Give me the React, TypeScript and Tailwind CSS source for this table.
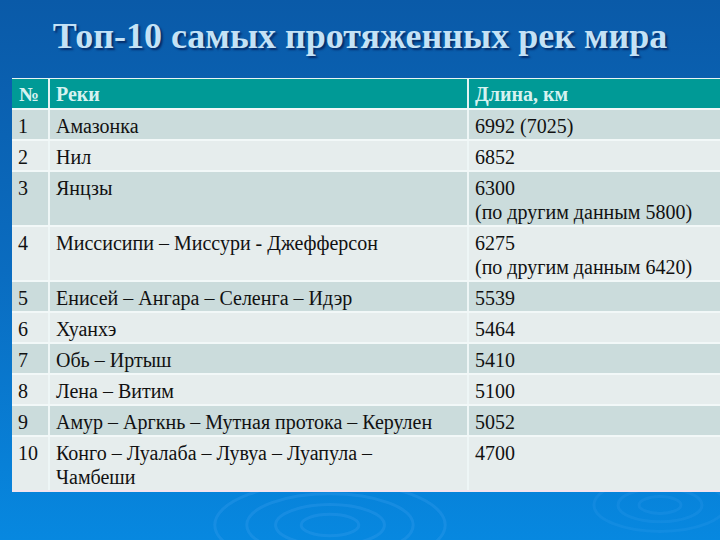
const rows: { n: string; name: string[]; len: string[] }[] = [
  { n: '1', name: ['Амазонка'], len: ['6992 (7025)'] },
  { n: '2', name: ['Нил'], len: ['6852'] },
  { n: '3', name: ['Янцзы'], len: ['6300', '(по другим данным 5800)'] },
  { n: '4', name: ['Миссисипи – Миссури - Джефферсон'], len: ['6275', '(по другим данным 6420)'] },
  { n: '5', name: ['Енисей – Ангара – Селенга – Идэр'], len: ['5539'] },
  { n: '6', name: ['Хуанхэ'], len: ['5464'] },
  { n: '7', name: ['Обь – Иртыш'], len: ['5410'] },
  { n: '8', name: ['Лена – Витим'], len: ['5100'] },
  { n: '9', name: ['Амур – Аргкнь – Мутная протока – Керулен'], len: ['5052'] },
  { n: '10', name: ['Конго – Луалаба – Лувуа – Луапула –', 'Чамбеши'], len: ['4700'] },
];

function Ripples() {
  return (
    <svg className="absolute left-0 top-0 pointer-events-none" width="720" height="540" viewBox="0 0 720 540">
      {[18, 34, 52, 72].map((r) => (
        <ellipse key={r} cx="330" cy="525" rx={r * 1.6} ry={r * 0.6} fill="none" stroke="#3aa0ee" strokeOpacity="0.3" strokeWidth="3" />
      ))}
      {[14, 28, 44].map((r) => (
        <ellipse key={'b' + r} cx="660" cy="505" rx={r * 1.5} ry={r * 0.6} fill="none" stroke="#3aa0ee" strokeOpacity="0.2" strokeWidth="3" />
      ))}
    </svg>
  );
}

export default function App() {
  return (
    <div className="relative w-[720px] h-[540px] overflow-hidden bg-gradient-to-b from-[#0a5aa8] via-[#0a6cc0] to-[#0788e0] [font-family:'Liberation_Serif',serif]">
      <Ripples />
      <div className="relative h-[78px] pt-[15px] text-center">
        <h1 className="text-[36px] leading-[43px] font-bold text-[#c4e2f6] [text-shadow:2px_2px_2px_rgba(0,10,60,0.6)]">
          Топ-10 самых протяженных рек мира
        </h1>
      </div>
      <div className="relative ml-[12px] w-[730px] border-t border-[#e8f4f4]">
        <div className="grid grid-cols-[38px_419px_1fr] bg-[#009a96] text-[#d6f2f0] font-bold text-[20px] leading-[24px] h-[29px]">
          <div className="pl-[7px] pt-[3px] border-r-2 border-[#e4f2f2]">№</div>
          <div className="pl-[6px] pt-[3px] border-r-2 border-[#e4f2f2]">Реки</div>
          <div className="pl-[6px] pt-[3px]">Длина, км</div>
        </div>
        {rows.map((r, i) => (
          <div
            key={r.n}
            className={
              'grid grid-cols-[38px_419px_1fr] border-t-2 border-[#f2f8f8] text-[20px] leading-[24px] text-[#111] ' +
              (i % 2 === 0 ? 'bg-[#cbdcdc]' : 'bg-[#e6eded]')
            }
          >
            <div className="pl-[6px] pt-[4px] pb-[1px] border-r-2 border-[#eef6f6]">{r.n}</div>
            <div className="pl-[6px] pt-[4px] pb-[1px] border-r-2 border-[#eef6f6]">
              {r.name.map((t) => (
                <div key={t}>{t}</div>
              ))}
            </div>
            <div className="pl-[6px] pt-[4px] pb-[1px]">
              {r.len.map((t) => (
                <div key={t}>{t}</div>
              ))}
            </div>
          </div>
        ))}
        <div className="h-[2px] bg-[#f4e4ee]" />
      </div>
    </div>
  );
}
